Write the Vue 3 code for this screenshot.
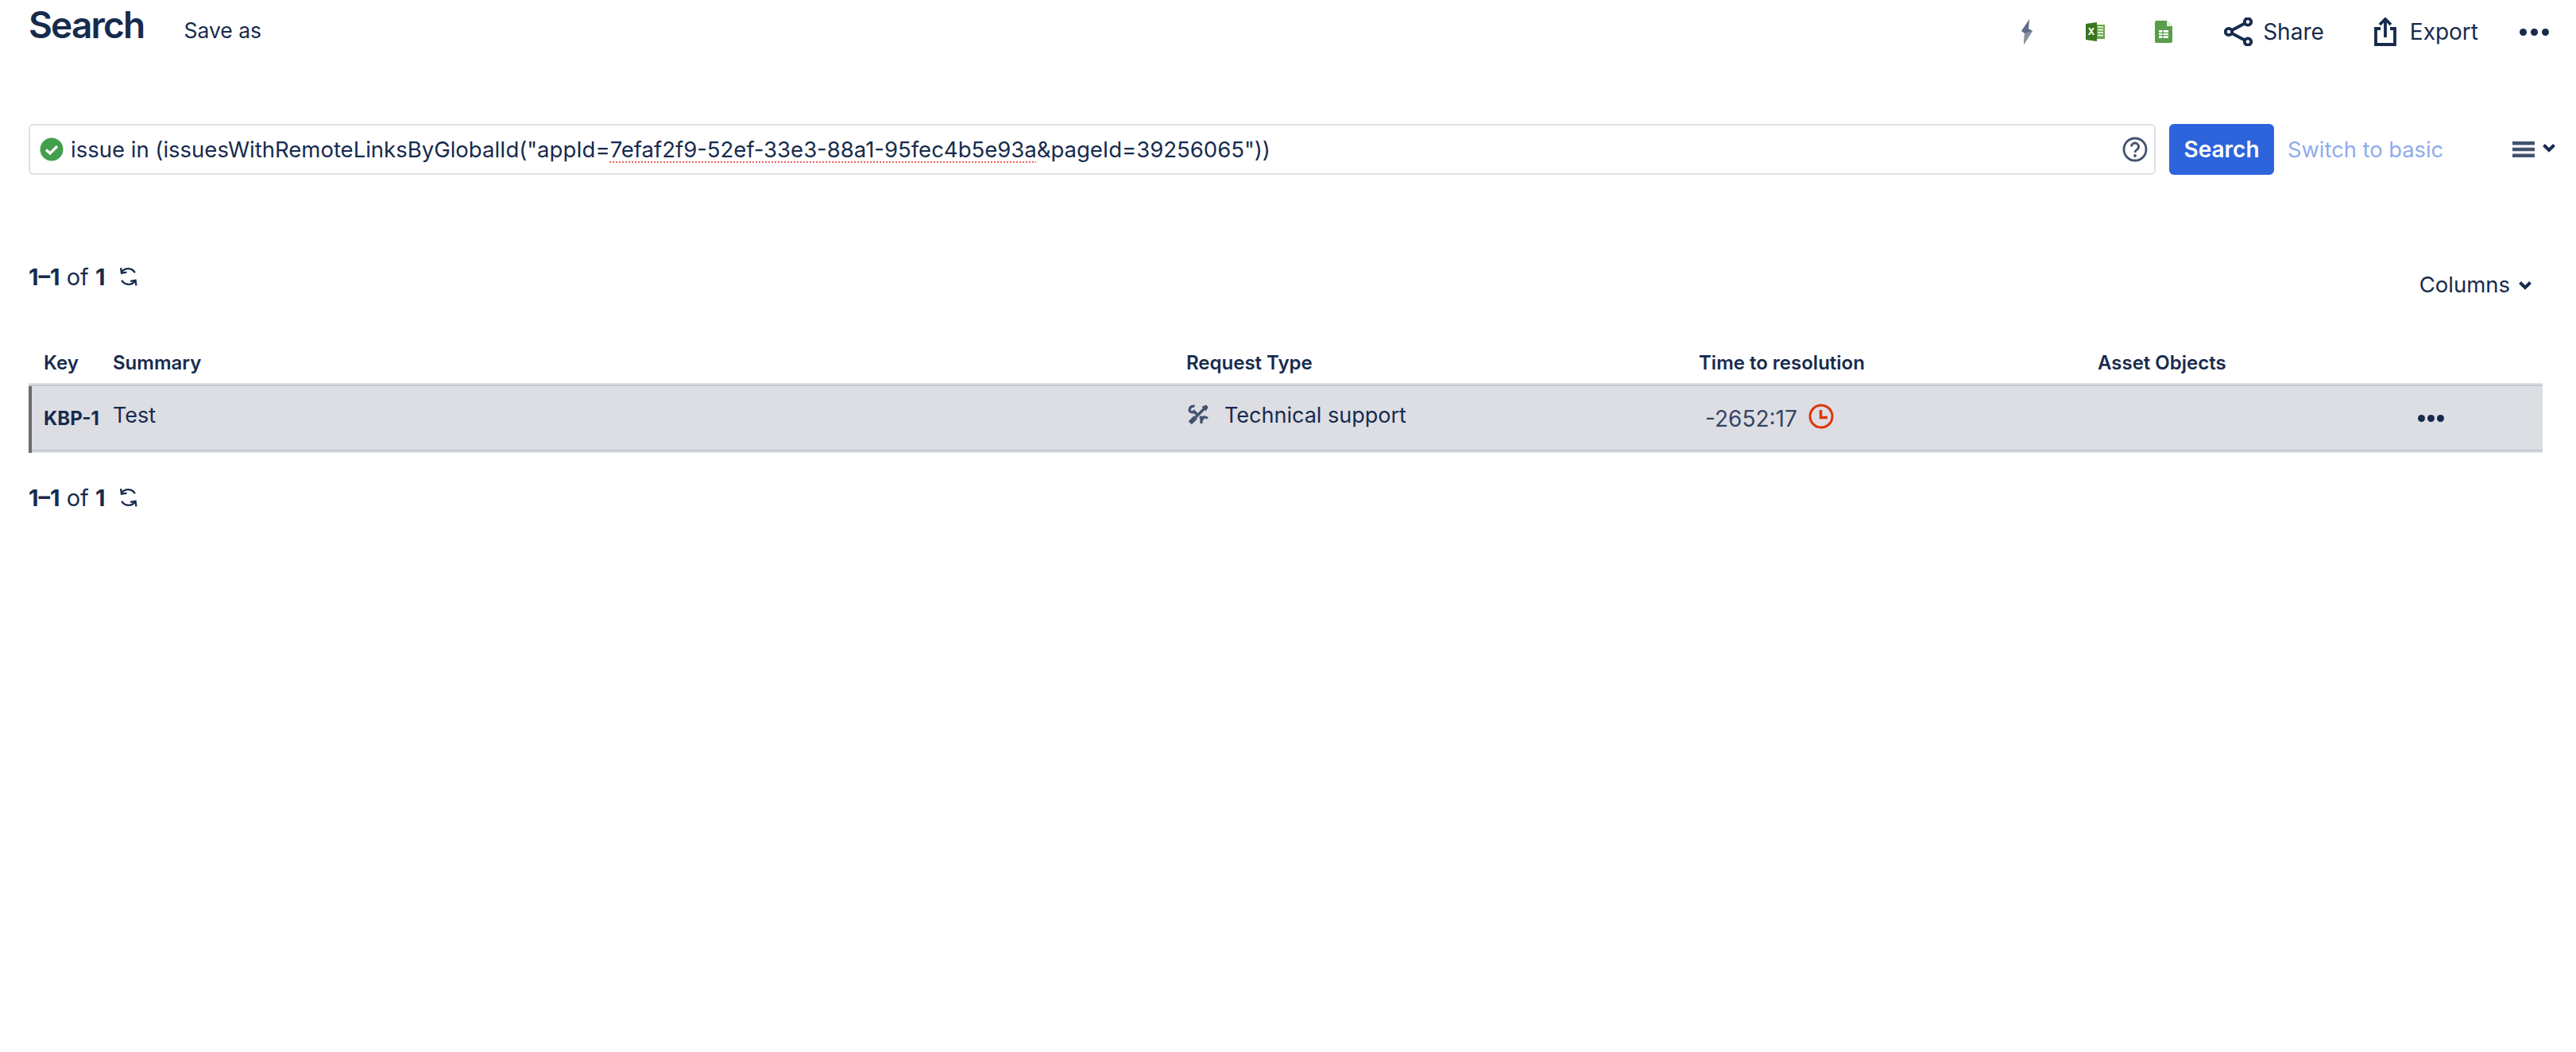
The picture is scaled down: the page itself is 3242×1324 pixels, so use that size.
<script setup>
const columns = [
  { label: 'Key', cls: 'c-key' },
  { label: 'Summary', cls: 'c-sum' },
  { label: 'Request Type', cls: 'c-req' },
  { label: 'Time to resolution', cls: 'c-time' },
  { label: 'Asset Objects', cls: 'c-asset' },
  { label: '', cls: 'c-act' }
]
</script>

<template>
  <div class="page">
    <header class="top">
      <h1 class="title">Search</h1>
      <span class="save">Save as</span>
      <div class="tools">
        <svg class="i-bolt" viewBox="0 0 16 32"><polygon points="11,0 1,15 5,18 4,32 15,15 10,12" fill="#5e6c84"/><polygon points="5,18 4,32 15,15" fill="#8993a4"/></svg>
        <svg class="i-xls" viewBox="0 0 24 24"><rect x="8" y="3" width="16" height="18" fill="#6aa84f"/><path d="M15 6h7M15 9.500h7M15 13h7M15 16.500h7" stroke="#fff" stroke-width="1.600"/><polygon points="0,2 14,0 14,24 0,22" fill="#38761d"/><text x="2.600" y="16" class="xls-x">X</text></svg>
        <svg class="i-sheet" viewBox="0 0 22 28"><path d="M2 0h13l7 7v19a2 2 0 0 1-2 2H2a2 2 0 0 1-2-2V2a2 2 0 0 1 2-2z" fill="#5a9e4b"/><path d="M15 0l7 7h-7z" fill="#dfeedd"/><path d="M5 12h12v10H5z" fill="#fff"/><path d="M5 15.300h12M5 18.600h12M10 12v10" stroke="#5a9e4b" stroke-width="1.200"/></svg>
        <button class="tool share">
          <svg class="i-share" viewBox="0 0 36 36" fill="none" stroke="#172b4d" stroke-width="3.800"><circle cx="6" cy="18" r="4.200"/><circle cx="30" cy="5.500" r="4.200"/><circle cx="30" cy="30.500" r="4.200"/><path d="M10 16l16-8.500M10 20l16 8.500"/></svg>
          <span>Share</span>
        </button>
        <button class="tool export">
          <svg class="i-export" viewBox="0 0 28 36" fill="none" stroke="#172b4d" stroke-width="3.800"><path d="M8 14H2v20h24V14h-6"/><path d="M14 25V3M7 9l7-7 7 7"/></svg>
          <span>Export</span>
        </button>
        <div class="dots big"><i></i><i></i><i></i></div>
      </div>
    </header>

    <section class="jql-row">
      <div class="jql">
        <svg class="i-ok" viewBox="0 0 30 30"><circle cx="15" cy="15" r="14.500" fill="#439f4e"/><path d="M8 15.500l5 4.500 9-9" fill="none" stroke="#fff" stroke-width="3.400"/></svg>
        <span class="query">issue in (issuesWithRemoteLinksByGlobalId("appId=<span class="spell">7efaf2f9-52ef-33e3-88a1-95fec4b5e93a</span>&amp;pageId=39256065"))</span>
        <svg class="i-help" viewBox="0 0 32 32" fill="none"><circle cx="16" cy="16" r="14" stroke="#42526e" stroke-width="2.800"/><path d="M11.500 12.500a4.500 4.500 0 1 1 6.800 3.900c-1.500.9-2.300 1.700-2.300 3.600" stroke="#42526e" stroke-width="2.800"/><circle cx="16" cy="24" r="1.900" fill="#42526e"/></svg>
      </div>
      <button class="go">Search</button>
      <span class="basic">Switch to basic</span>
      <div class="view">
        <svg class="i-burger" viewBox="0 0 28 20"><path d="M0 0h28v4.400H0zM0 7.800h28v4.400H0zM0 15.600h28V20H0z" fill="#42526e"/></svg>
        <svg class="i-chev" viewBox="0 0 16 11" fill="none"><path d="M1.500 1.500l6.500 6.500 6.500-6.500" stroke="#172b4d" stroke-width="4"/></svg>
      </div>
    </section>

    <section class="bar">
      <div class="count">
        <span><b>1–1</b> of <b>1</b></span>
        <svg class="i-refresh" viewBox="0 0 24 24" fill="none" stroke="#172b4d" stroke-width="2.200"><path d="M20 7.500A9.500 9.500 0 0 0 4 6.500"/><path d="M3 1.500l.8 6.300 6.200-1"/><path d="M4 16.500a9.500 9.500 0 0 0 16 1"/><path d="M21.500 23l-.8-6.300-6.200 1"/></svg>
      </div>
      <div class="cols">Columns
        <svg class="i-chev" viewBox="0 0 16 11" fill="none"><path d="M1.500 1.500l6.500 6.500 6.500-6.500" stroke="#172b4d" stroke-width="4"/></svg>
      </div>
    </section>

    <div class="grid head">
      <div v-for="c in columns" :key="c.cls" :class="c.cls">{{ c.label }}</div>
    </div>
    <div class="grid row">
      <div class="c-key key">KBP-1</div>
      <div class="c-sum">Test</div>
      <div class="c-req type">
        <svg class="i-tools" viewBox="0 0 24 24" fill="none" stroke="#42526e"><path d="M2.500 21.500L9 15" stroke-width="5.400"/><path d="M9 15L20 4" stroke-width="3.200"/><path d="M21 1l2 2-2 4-4-4z" fill="#42526e" stroke-width="1"/><path d="M7.800 2.200A4.400 4.400 0 0 0 2.200 7.800 4.400 4.400 0 0 0 8.500 8" stroke-width="3"/><path d="M6 7l4.500 4.500" stroke-width="3.200"/><path d="M14 14l4 4" stroke-width="3.200"/><path d="M16.500 21.800A4.400 4.400 0 0 1 17 15.500a4.400 4.400 0 0 1 5.800.8" stroke-width="3"/></svg>
        <span>Technical support</span>
      </div>
      <div class="c-time time">
        <span>-2652:17</span>
        <svg class="i-clock" viewBox="0 0 32 32" fill="none"><circle cx="16" cy="16" r="14" stroke="#de350b" stroke-width="3"/><path d="M15.500 8v9.500H24" stroke="#de350b" stroke-width="3.400"/></svg>
      </div>
      <div class="c-asset"></div>
      <div class="c-act"><div class="dots"><i></i><i></i><i></i></div></div>
    </div>
    <div class="count foot">
      <span><b>1–1</b> of <b>1</b></span>
      <svg class="i-refresh" viewBox="0 0 24 24" fill="none" stroke="#172b4d" stroke-width="2.200"><path d="M20 7.500A9.500 9.500 0 0 0 4 6.500"/><path d="M3 1.500l.8 6.300 6.200-1"/><path d="M4 16.500a9.500 9.500 0 0 0 16 1"/><path d="M21.500 23l-.8-6.300-6.200 1"/></svg>
    </div>
  </div>
</template>

<style>
html, body { background: #fff; }
</style>

<style scoped>
.page {
  width: 3242px;
  height: 1324px;
  box-sizing: border-box;
  overflow: hidden;
  padding: 0 34px 0 36px;
  background: #fff;
  color: #172b4d;
  font-family: Inter, "Liberation Sans", sans-serif;
  font-size: 28px;
}
svg { display: block; flex: none; }
button { font: inherit; color: inherit; background: none; border: 0; padding: 0; }

.top { display: flex; align-items: center; height: 80px; }
.title { margin: 0 0 18px; font-size: 46px; line-height: 62px; font-weight: 600; letter-spacing: -1.800px; }
.save { margin-left: 50px; margin-bottom: 4px; font-size: 26.500px; }
.tools { margin-left: auto; display: flex; align-items: center; }
.i-bolt { width: 16px; height: 32px; }
.i-xls { width: 24px; height: 24px; margin-left: 66px; }
.xls-x { font: 700 12px Inter, sans-serif; fill: #fff; }
.i-sheet { width: 22px; height: 28px; margin-left: 63px; }
.tool { display: flex; align-items: center; }
.share { margin-left: 65px; gap: 13px; }
.export { margin-left: 63px; gap: 17px; }
.i-share { width: 36px; height: 36px; }
.i-export { width: 28px; height: 36px; }
.dots { display: flex; gap: 3px; }
.dots i { width: 9px; height: 9px; border-radius: 50%; background: #172b4d; }
.dots.big { margin-left: 52px; gap: 5px; }

.jql-row { display: flex; align-items: center; margin-top: 76px; height: 64px; }
.jql {
  flex: none; width: 2677px; height: 64px; box-sizing: border-box;
  border: 2px solid #dfe1e6; border-radius: 6px;
  display: flex; align-items: center; padding: 0 8px 0 12px;
}
.i-ok { width: 30px; height: 30px; margin-right: 9px; }
.query { flex: 1; white-space: nowrap; font-size: 27.500px; }
.spell { text-decoration: underline dotted #f0645a 2px; text-underline-offset: 5px; }
.i-help { width: 32px; height: 32px; }
.go {
  flex: none; margin-left: 17px; width: 132px; height: 64px; border-radius: 6px;
  background: #2d64dc; color: #fff; font-size: 28px; font-weight: 600;
}
.basic { flex: none; margin-left: 17px; color: #8fabec; font-size: 27.300px; white-space: nowrap; }
.view { margin-left: auto; margin-right: -8px; display: flex; gap: 10px; align-items: flex-start; }
.i-burger { width: 28px; height: 20px; }
.i-chev { width: 16px; height: 11px; margin-top: 3px; }

.bar { display: flex; justify-content: space-between; margin-top: 106px; height: 50px; }
.count { display: flex; align-items: center; gap: 17px; white-space: pre; height: 44px; font-size: 29px; }
.count b { font-weight: 700; }
.i-refresh { width: 25px; height: 26px; }
.cols { display: flex; align-items: center; gap: 11px; margin-top: 12px; height: 40px; padding-right: 22px; font-size: 27.500px; }

.grid { display: grid; grid-template-columns: 106px 1351px 645px 502px 403px 157px; width: 3164px; }
.head { margin-top: 64px; height: 32px; align-items: center; font-size: 24px; font-weight: 600; }
.row {
  margin-top: 10px; height: 88px;
  background:
    linear-gradient(#6b6b6b, #6b6b6b) no-repeat 0 4px / 4px 100%,
    linear-gradient(#dfe1e6 0 2px, #c1c7d0 2px 4px, #dddee4 4px 84px, #c1c7d0 84px 86px, #dfe1e6 86px);
  align-items: center;
}
.head > .c-key, .row > .c-key { padding-left: 19px; }
.row > .c-sum { margin-bottom: 8px; font-size: 27px; }
.key { font-size: 24px; font-weight: 700; }
.type { display: flex; align-items: center; gap: 20px; margin-bottom: 8px; font-size: 27px; }
.i-tools { width: 26px; height: 26px; margin-left: 2px; }
.time { display: flex; align-items: center; gap: 14px; color: #344563; padding: 2px 0 0 8px; }
.i-clock { width: 32px; height: 32px; margin-bottom: 6px; }
.foot { margin-top: 34px; }
</style>
